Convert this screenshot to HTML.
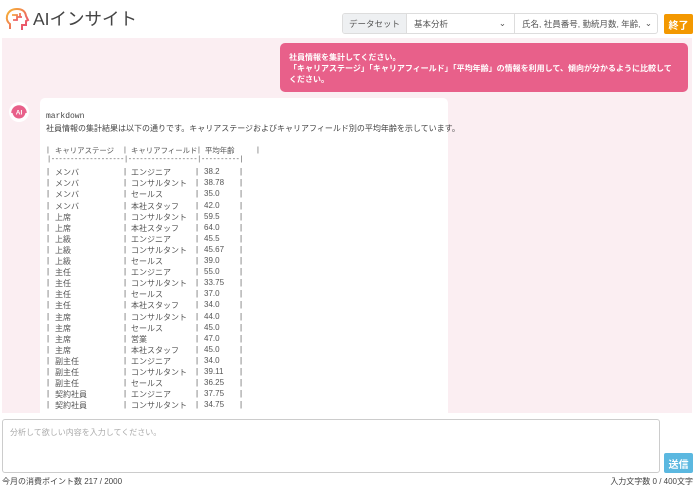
<!DOCTYPE html>
<html><head><meta charset="utf-8">
<style>
*{margin:0;padding:0;box-sizing:border-box}
body{width:699px;height:491px;background:#fff;font-family:"Liberation Sans","Noto Sans CJK JP",sans-serif;position:relative;overflow:hidden;color:#333}
.abs{position:absolute}
.logo-t{left:33px;top:6px;font-size:17.5px;color:#444;white-space:nowrap}
.ds{left:342px;top:13px;width:316px;height:21px;border:1px solid #ddd;border-radius:3px;display:flex;font-size:8.5px;color:#555;overflow:hidden;white-space:nowrap}
.ds div{display:flex;align-items:center;padding:0 7px;border-right:1px solid #ddd;position:relative;overflow:hidden}
.btn{border-radius:2px;color:#fff;font-size:10px;font-weight:bold;display:flex;align-items:center;justify-content:center}
.pink{left:2px;top:38px;width:690px;height:375px;background:#fbeef2}
.user{left:280px;top:43px;width:408px;height:49px;background:#e8608a;border-radius:5px;color:#fff;font-size:8px;font-weight:bold;padding:9px 9px;line-height:11px}
.ai{left:40px;top:98px;width:408px;height:315px;background:#fff;border-radius:5px 5px 0 0;font-size:8px;color:#444}
.row{position:absolute;left:47px;height:11px;white-space:nowrap;font-size:8px;color:#555}
.row span{position:absolute;top:0}
</style></head><body>
<svg class="abs" style="left:4px;top:7px" width="28" height="26" viewBox="0 0 28 26">
<defs><linearGradient id="g" x1="0" y1="0" x2="1" y2="1"><stop offset="0" stop-color="#f7b733"/><stop offset="1" stop-color="#e8407a"/></linearGradient></defs>
<path d="M6 22 V17 Q2 14 3 9 Q5 2 13 2 Q21 2 22 9 L24 13 L22 14 V18 H18 V23" fill="none" stroke="url(#g)" stroke-width="2"/>
<path d="M8 8 H13 V13 H9 M13 10 H18 M16 6 V10" fill="none" stroke="url(#g)" stroke-width="1.8"/>
</svg>
<div class="abs logo-t">AIインサイト</div>
<div class="abs ds">
<div style="background:#eef0f2;width:64px;justify-content:center">データセット</div>
<div style="width:108px">基本分析<span style="position:absolute;right:8px">⌄</span></div>
<div style="border:none;flex:1;padding-right:20px">氏名, 社員番号, 勤続月数, 年齢, (<span style="position:absolute;right:5px;background:#fff;padding-left:3px">⌄</span></div>
</div>
<div class="abs btn" style="left:664px;top:14px;width:29px;height:20px;background:#f39800">終了</div>
<div class="abs pink"></div>
<div class="abs user">社員情報を集計してください。<br>「キャリアステージ」「キャリアフィールド」「平均年齢」の情報を利用して、傾向が分かるように比較してください。</div>
<svg class="abs" style="left:9px;top:102px" width="20" height="20" viewBox="0 0 20 20"><circle cx="10" cy="10" r="10" fill="#fff"/><circle cx="10" cy="10" r="6.5" fill="#e8608a"/><path d="M3 11 A7 7 0 0 1 17 11" fill="none" stroke="#e8608a" stroke-width="1.5"/><text x="10" y="12.5" font-size="6.5" fill="#fff" text-anchor="middle" font-weight="bold" font-family="Liberation Sans">AI</text></svg>
<div class="abs ai">
<div style="position:absolute;left:6px;top:14px;font-family:'Liberation Mono',monospace;font-size:8px">markdown</div>
<div style="position:absolute;left:6px;top:25px;white-space:nowrap">社員情報の集計結果は以下の通りです。キャリアステージおよびキャリアフィールド別の平均年齢を示しています。</div>
</div>
<div id="t"></div>
<script>
var rows=[["キャリアステージ","キャリアフィールド","平均年齢"],null,["メンバ","エンジニア","38.2"],["メンバ","コンサルタント","38.78"],["メンバ","セールス","35.0"],["メンバ","本社スタッフ","42.0"],["上席","コンサルタント","59.5"],["上席","本社スタッフ","64.0"],["上級","エンジニア","45.5"],["上級","コンサルタント","45.67"],["上級","セールス","39.0"],["主任","エンジニア","55.0"],["主任","コンサルタント","33.75"],["主任","セールス","37.0"],["主任","本社スタッフ","34.0"],["主席","コンサルタント","44.0"],["主席","セールス","45.0"],["主席","営業","47.0"],["主席","本社スタッフ","45.0"],["副主任","エンジニア","34.0"],["副主任","コンサルタント","39.11"],["副主任","セールス","36.25"],["契約社員","エンジニア","37.75"],["契約社員","コンサルタント","34.75"]];
var h="";
rows.forEach(function(r,i){var y=145+i*11.1;
if(!r){h+='<div class="row" style="top:'+y+'px;font-family:Liberation Mono,monospace;font-size:7px;letter-spacing:-0.35px">|-------------------|------------------|----------|</div>';return;}
var e=i==0?210:193;
var fs=i==0?'font-size:7.4px;':'';
h+='<div class="row" style="top:'+y+'px;'+fs+'"><span style="left:0">|</span><span style="left:8px">'+r[0]+'</span><span style="left:77px">|</span><span style="left:84px">'+r[1]+'</span><span style="left:'+(i==0?151:149)+'px">|</span><span style="left:'+(i==0?158:157)+'px">'+r[2]+'</span><span style="left:'+e+'px">|</span></div>';});
document.getElementById("t").innerHTML=h;
</script>
<div class="abs" style="left:2px;top:419px;width:658px;height:54px;border:1px solid #ccc;border-radius:3px;font-size:8px;color:#aaa;padding:7px 7px;background:#fff">分析して欲しい内容を入力してください。</div>
<div class="abs btn" style="left:664px;top:453px;width:29px;height:20px;background:#5bb8e0">送信</div>
<div class="abs" style="left:2px;top:476px;font-size:8px;color:#444">今月の消費ポイント数 217 / 2000</div>
<div class="abs" style="right:6px;top:476px;font-size:8px;color:#444">入力文字数 0 / 400文字</div>
</body></html>
